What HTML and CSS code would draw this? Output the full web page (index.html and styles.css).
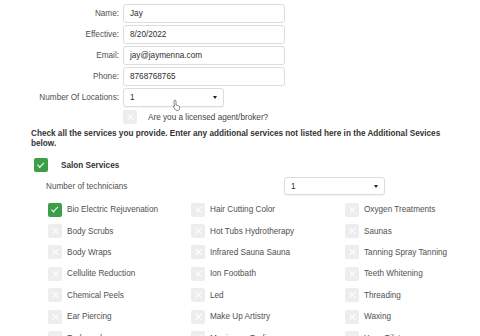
FILE: index.html
```html
<!DOCTYPE html>
<html lang="en">
<head>
  <meta charset="UTF-8">
  <meta name="viewport" content="width=device-width, initial-scale=1.0">
  <title>Services</title>
  <link rel="stylesheet" href="styles.css">
</head>
<body>
  <div class="MainForm">
    <div class="fieldRow">
      <label class="fieldLabel">Name:</label>
      <div class="textBox">Jay</div>
    </div>
    <div class="fieldRow">
      <label class="fieldLabel">Effective:</label>
      <div class="textBox">8/20/2022</div>
    </div>
    <div class="fieldRow">
      <label class="fieldLabel">Email:</label>
      <div class="textBox">jay@jaymenna.com</div>
    </div>
    <div class="fieldRow">
      <label class="fieldLabel">Phone:</label>
      <div class="textBox">8768768765</div>
    </div>
    <div class="fieldRow">
      <label class="fieldLabel">Number Of Locations:</label>
      <div class="selectBox smallSelect">1<span class="caret"></span></div>
      <svg class="pointer" width="10" height="12" viewBox="0 0 10 12">
        <path d="M3 1.2c.6 0 1 .4 1 1V6l.3-.1c.5-.1 1 .2 1.1.6.5-.2 1 .1 1.1.5.5-.1 1 .2 1 .7V9.5C7.5 10.800 6.500 11.500 5.300 11.500 4.200 11.500 3.300 10.900 2.800 10L1.500 7.700c-.3-.5 0-1 .5-1 .3 0 .6.2.8.5L2 5V2.200c0-.6.4-1 1-1z" fill="#fff" stroke="#666" stroke-width=".8"/>
      </svg>
    </div>
    <div class="agentRow">
      <span class="check"></span>
      <span class="agentText">Are you a licensed agent/broker?</span>
    </div>

    <p class="intro">Check all the services you provide. Enter any additional services not listed here in the Additional Sevices below.</p>

    <div class="groupRow">
      <span class="check checked"></span>
      <span class="groupTitle">Salon Services</span>
    </div>
    <div class="techRow">
      <span class="techLabel">Number of technicians</span>
      <div class="selectBox techSelect">1<span class="caret"></span></div>
    </div>

    <div class="serviceGrid">
      <div class="service"><span class="check checked"></span>Bio Electric Rejuvenation</div>
      <div class="service"><span class="check"></span>Hair Cutting Color</div>
      <div class="service"><span class="check"></span>Oxygen Treatments</div>
      <div class="service"><span class="check"></span>Body Scrubs</div>
      <div class="service"><span class="check"></span>Hot Tubs Hydrotherapy</div>
      <div class="service"><span class="check"></span>Saunas</div>
      <div class="service"><span class="check"></span>Body Wraps</div>
      <div class="service"><span class="check"></span>Infrared Sauna Sauna</div>
      <div class="service"><span class="check"></span>Tanning Spray Tanning</div>
      <div class="service"><span class="check"></span>Cellulite Reduction</div>
      <div class="service"><span class="check"></span>Ion Footbath</div>
      <div class="service"><span class="check"></span>Teeth Whitening</div>
      <div class="service"><span class="check"></span>Chemical Peels</div>
      <div class="service"><span class="check"></span>Led</div>
      <div class="service"><span class="check"></span>Threading</div>
      <div class="service"><span class="check"></span>Ear Piercing</div>
      <div class="service"><span class="check"></span>Make Up Artistry</div>
      <div class="service"><span class="check"></span>Waxing</div>
      <div class="service"><span class="check"></span>Endermology</div>
      <div class="service"><span class="check"></span>Manicures Pedicures</div>
      <div class="service"><span class="check"></span>Yoga Pilates</div>
    </div>
  </div>
</body>
</html>
```

FILE: styles.css
```css
body{
  margin: 0;
  background-color: #ffffff;
  font-family: "Liberation Sans", Arial, sans-serif;
  font-size: 8.2px;
  color: #444444;
  overflow: hidden;
}
.MainForm{
  padding-top: 4px;
}
.fieldRow{
  display: flex;
  align-items: center;
  height: 19px;
  margin-bottom: 2px;
  position: relative;
}
.fieldLabel{
  width: 119px;
  padding-right: 4px;
  text-align: right;
  color: #505050;
}
.textBox,
.selectBox{
  box-sizing: border-box;
  height: 19px;
  width: 162px;
  padding: 0 6px;
  display: flex;
  align-items: center;
  border: 1px solid #dcdcdc;
  border-radius: 3px;
  color: #2e2e2e;
  background-color: #ffffff;
}
.selectBox{
  justify-content: space-between;
  box-shadow: 0 1px 1px rgba(0,0,0,0.06);
}
.smallSelect{
  width: 101px;
}
.caret{
  width: 0;
  height: 0;
  border-left: 2.5px solid transparent;
  border-right: 2.5px solid transparent;
  border-top: 3px solid #222222;
}
.pointer{
  position: absolute;
  left: 172px;
  top: 11px;
}
.check{
  position: relative;
  display: inline-block;
  flex: none;
  width: 14px;
  height: 14px;
  border-radius: 2px;
  background-color: #ebedef;
}
.check::before,
.check::after{
  content: "";
  position: absolute;
  left: 6.5px;
  top: 3px;
  width: 1px;
  height: 8px;
  background-color: #ffffff;
  transform: rotate(45deg);
}
.check::after{
  transform: rotate(-45deg);
}
.check.checked{
  background-color: #3d9e4a;
}
.check.checked::before{
  left: 3.5px;
  top: 6px;
  width: 1.4px;
  height: 3.5px;
  transform: rotate(-45deg);
}
.check.checked::after{
  left: 7px;
  top: 3.5px;
  width: 1.4px;
  height: 7px;
  transform: rotate(45deg);
}
.agentRow{
  display: flex;
  align-items: center;
  margin-left: 123px;
  margin-top: 3px;
  height: 14px;
}
.agentText{
  margin-left: 11px;
  color: #444444;
}
.intro{
  margin: 5px 0 0 31px;
  width: 430px;
  font-weight: bold;
  line-height: 10px;
  color: #333333;
}
.groupRow{
  display: flex;
  align-items: center;
  margin: 9px 0 0 34px;
  height: 14px;
}
.groupTitle{
  margin-left: 13px;
  font-weight: bold;
  color: #333333;
}
.techRow{
  display: flex;
  align-items: center;
  margin-top: 5px;
  height: 18px;
}
.techLabel{
  width: 238px;
  padding-left: 46px;
  color: #505050;
}
.techSelect{
  width: 101px;
  height: 18px;
}
.serviceGrid{
  display: grid;
  grid-template-columns: 143px 154px 1fr;
  grid-auto-rows: 21.4px;
  margin: 4px 0 0 48px;
}
.service{
  display: flex;
  align-items: center;
  color: #505050;
}
.service .check{
  margin-right: 5px;
}
```
